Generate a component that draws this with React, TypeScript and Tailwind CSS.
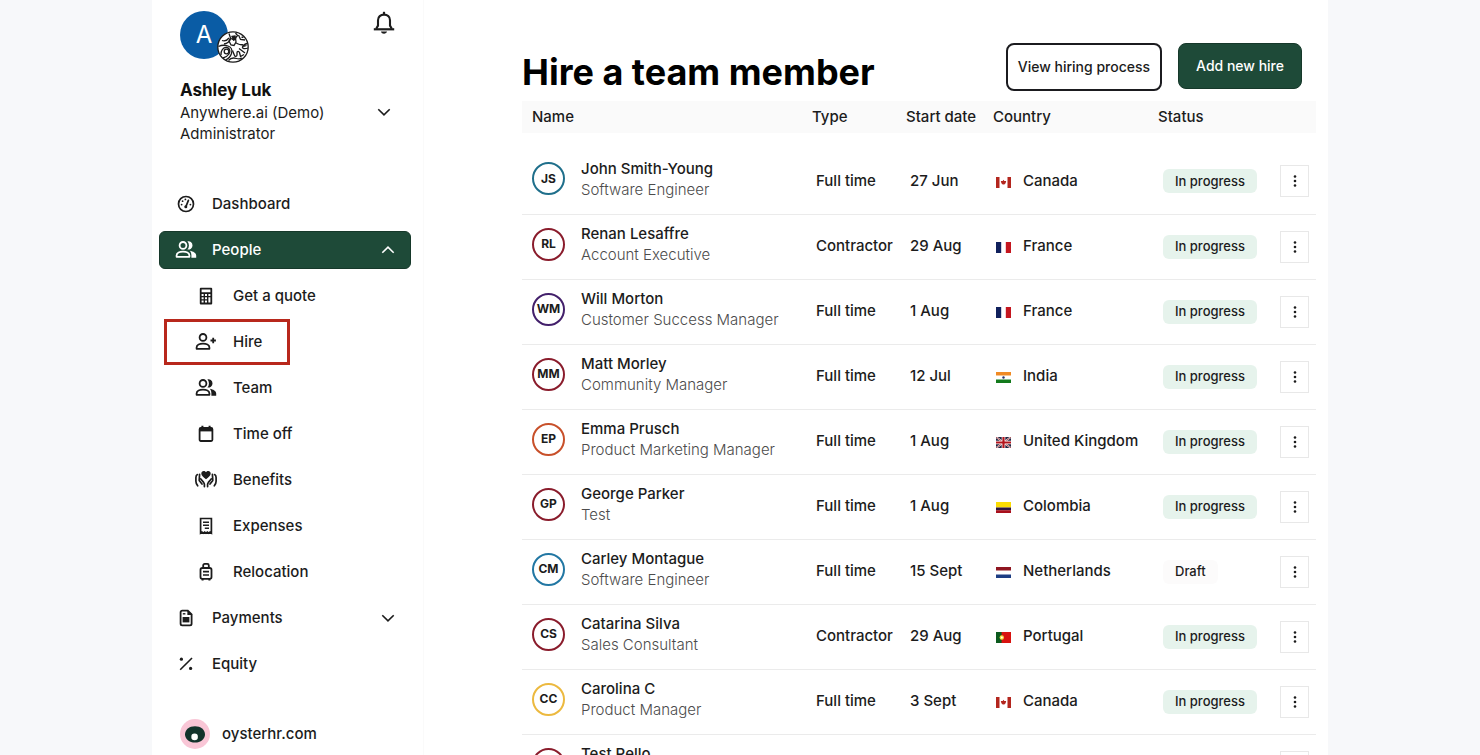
import React from "react";

type IconProps = { className?: string };

const base = {
  width: 20,
  height: 20,
  viewBox: "0 0 20 20",
  fill: "none",
  stroke: "currentColor",
  strokeWidth: 1.8,
  "aria-hidden": true,
} as const;

const GaugeIcon = () => (
  <svg {...base}>
    <circle cx="10" cy="10" r="7.5" strokeWidth="1.7" />
    <path d="M10 12.4L12.4 6.4" strokeWidth="1.7" strokeLinecap="round" />
    <circle cx="9.8" cy="12.8" r="1.5" fill="currentColor" stroke="none" />
    <g fill="currentColor" stroke="none">
      <circle cx="5.6" cy="10.6" r="0.9" />
      <circle cx="6.6" cy="7.2" r="0.9" />
      <circle cx="9.4" cy="5.4" r="0.9" />
      <circle cx="14.4" cy="10.6" r="0.9" />
    </g>
  </svg>
);

const PeopleIcon = () => (
  <svg {...base} width={22} height={20} viewBox="0 0 22 20" className="shrink-0">
    <circle cx="8" cy="5.4" r="3.4" />
    <path d="M1.6 16.800v-1.400c0-2.500 3.200-3.800 6.400-3.800s6.400 1.300 6.400 3.800v1.400z" strokeLinejoin="round" />
    <path d="M12.400 1.300a4.200 4.200 0 1 1 0 8.200 6.200 6.200 0 0 0 0-8.200z" fill="currentColor" stroke="none" />
    <path d="M14.800 10.700c3.400.6 6.400 2.200 6.400 4.800v2.200h-4.800v-2.200c0-2-.4-3.400-1.600-4.800z" fill="currentColor" stroke="none" />
  </svg>
);

const CalculatorIcon = () => (
  <svg {...base}>
    <path
      fillRule="evenodd"
      fill="currentColor"
      stroke="none"
      d="M3.800 2.800a1 1 0 0 1 1-1h10.400a1 1 0 0 1 1 1v14.600a1 1 0 0 1-1 1H4.800a1 1 0 0 1-1-1zM5.600 3.600v2.600h8.800V3.600zM5.600 8v1.900h2V8zM9 8v1.900h2V8zM12.400 8v1.900h2V8zM5.600 11.300v1.900h2v-1.900zM9 11.300v1.900h2v-1.900zM12.400 11.300v5.300h2v-5.300zM5.600 14.600v2h2v-2zM9 14.600v2h2v-2z"
    />
  </svg>
);

const HireIcon = () => (
  <svg {...base} width={22} height={20} viewBox="0 0 22 20">
    <circle cx="8" cy="5.400" r="3.400" />
    <path d="M1.600 16.800v-1.400c0-2.500 3.200-3.800 6.400-3.800s6.400 1.300 6.400 3.800v1.400z" strokeLinejoin="round" />
    <path d="M18.200 5.800v5.400M15.500 8.500h5.400" />
  </svg>
);

const CalendarIcon = () => (
  <svg {...base}>
    <rect x="3.600" y="4" width="12.800" height="13" rx="1.200" strokeWidth="1.800" />
    <path d="M3.600 4.400h12.800v3H3.600z" fill="currentColor" stroke="none" />
    <path d="M6.400 1.800v3M13.600 1.800v3" strokeWidth="2" />
  </svg>
);

const BenefitsIcon = () => (
  <svg {...base} width={22} height={20} viewBox="0 0 22 20">
    <path
      d="M11 9.200C8.200 7.200 6.300 5.500 6.300 3.500c0-1.400 1.100-2.400 2.400-2.400.9 0 1.800.4 2.300 1.200.5-.8 1.400-1.200 2.300-1.200 1.300 0 2.400 1 2.400 2.400 0 2-1.900 3.700-4.700 5.700z"
      fill="currentColor"
      stroke="none"
    />
    <g strokeWidth="1.700" strokeLinecap="round" strokeLinejoin="round">
      <path d="M2.400 4.600C1.300 5.200.9 6.200.9 7.400v3.800c0 1.800.7 3.200 1.800 4.600" />
      <path d="M4.600 4.400L4.200 10.400 7 14" />
      <path d="M5.600 8.800l3 3.600c.6.800.8 1.400.8 2.200v2" />
      <path d="M19.600 4.600c1.100.6 1.500 1.600 1.500 2.800v3.800c0 1.800-.7 3.200-1.800 4.600" />
      <path d="M17.400 4.400l.4 6L15 14" />
      <path d="M16.400 8.800l-3 3.600c-.6.800-.8 1.400-.8 2.200v2" />
    </g>
  </svg>
);

const ReceiptIcon = () => (
  <svg {...base}>
    <path d="M4.600 2.500h10.800v14.600l-1.350-1-1.350 1-1.350-1-1.350 1-1.350-1-1.350 1-1.350-1-1.350 1z" strokeWidth="1.700" />
    <path d="M7 6.200h6M7 9.200h6M8.800 12.200H13" strokeWidth="1.500" />
  </svg>
);

const LuggageIcon = () => (
  <svg {...base}>
    <rect x="4.500" y="6" width="11" height="10.800" rx="1.800" strokeWidth="1.800" />
    <path d="M7.200 6V3.400c0-.9.6-1.500 1.500-1.500h2.600c.9 0 1.500.6 1.500 1.500V6" />
    <path d="M7 9.600h6M7 13h6" strokeWidth="1.600" />
    <path d="M6.600 17v1.600M13.400 17v1.600" strokeWidth="2" />
  </svg>
);

const PaymentsIcon = () => (
  <svg {...base}>
    <path d="M4.600 4.200c0-1 .6-1.600 1.600-1.600h5.600l3.800 3.800v9.400c0 1-.6 1.600-1.600 1.600H6.200c-1 0-1.600-.6-1.600-1.600z" strokeWidth="1.800" />
    <path d="M11.400 2v5h5z" fill="currentColor" stroke="none" />
    <path d="M6.600 9h6.800v5.400H6.600z" fill="currentColor" stroke="none" />
    <path d="M6.800 5.800h2.600" strokeWidth="1.400" />
  </svg>
);

const EquityIcon = () => (
  <svg {...base}>
    <path d="M4.200 15.800L16 4" strokeWidth="1.600" />
    <circle cx="5.400" cy="5.200" r="1.600" fill="currentColor" stroke="none" />
    <circle cx="14.600" cy="14.400" r="1.600" fill="currentColor" stroke="none" />
  </svg>
);

const BellIcon = () => (
  <svg {...base} width={24} height={24} viewBox="0 0 24 24">
    <path d="M1.800 18.300h20.400" strokeWidth="2.200" />
    <path d="M4.200 17.800L6 14.600V9.200C6 5.800 8.600 3.600 12 3.600s6 2.200 6 5.600v5.400l1.800 3.200" strokeWidth="2.100" />
    <path d="M12 .8v2.400" strokeWidth="2.200" />
    <path d="M9 20.600h6c-.3 1.400-1.500 2.200-3 2.200s-2.700-.8-3-2.200z" fill="currentColor" stroke="none" />
  </svg>
);

const Chevron = ({ up = false }: { up?: boolean }) => (
  <svg {...base} width={14} height={14} viewBox="0 0 14 14" strokeWidth={1.600}>
    <path d={up ? "M1.300 9.800L7 4.200l5.700 5.600" : "M1.300 4.200L7 9.800l5.700-5.600"} />
  </svg>
);

const OrgLogo = ({ className }: IconProps) => (
  <svg className={className} width="32" height="32" viewBox="0 0 32 32" fill="none" stroke="#1b1b1b" strokeWidth="1.300" aria-hidden>
    <circle cx="16" cy="16" r="15.200" fill="#fff" />
    <path d="M5 9.500c2.500 1 5 0 7-2.500M7 13c3-.5 5.500-2 6.500-5" />
    <path d="M12 2.500l1.500 4.500-1.500 3 2 4 3 .5 2-3.500-.5-4 2-2.500-2-2.500M14 7.500l3 1.500 2-2" />
    <path d="M15 5.500l3-.5.500 2.500-2 1.500z" fill="#1b1b1b" />
    <path d="M21.500 4l2 4.500 4.500.5M24.500 6.500l2-.5" />
    <path d="M1.500 15.500c3-1.500 6.500-1.500 9.500-.5 3.500 1.200 4.500 4.500 3.500 7.500s-3.500 5.500-6 6.500" />
    <path d="M4 24c-.5-4 2-8 6-7.500 3 .5 3.500 4 2 6.500-1.500 2.200-4 3.500-6 4" />
    <circle cx="9.500" cy="20.500" r="2.300" />
    <path d="M19 12c2.500 1 4 2.500 7 1.500M30.500 12.500c-2.500.5-4.500 1.500-5 3.500-.3 1.800 2.500 2 5.500 1M26.500 15.500l3-1" />
    <path d="M15.500 19.500l2 5c.5 1.500 2.500 1 2.500-.5v-2.500c0-1.500 2-1.500 2.500 0l1 4 3.500-2M22 17.500l6 4.500" />
    <path d="M11.500 29.500c2-2.500 5-3 8-2s4 .5 5.500-.5" />
  </svg>
);

const OysterLogo = () => (
  <svg width="30" height="30" viewBox="0 0 30 30" aria-hidden>
    <circle cx="15" cy="15" r="15" fill="#f9c6d6" />
    <path d="M15 7.200c5.700 0 10 3.500 10 8.100 0 4.900-4.300 8.300-10 8.300S5 20.200 5 15.300c0-4.600 4.300-8.100 10-8.100z" fill="#12332b" />
    <circle cx="14.600" cy="17.900" r="3.300" fill="#fff" />
  </svg>
);

const flags: Record<string, React.ReactNode> = {
  Canada: (
    <>
      <path fill="#fff" d="M0 0h15v11H0z" />
      <path fill="#b3261e" d="M0 0h3.500v11H0zM11.500 0H15v11h-3.500zM7.500 2.800l.8 1.200 1.900-.1-.6 2.300-1.300 1.300H6.700L5.400 6.200l-.6-2.300 1.900.1z" />
    </>
  ),
  France: (
    <>
      <path fill="#fff" d="M0 0h15v11H0z" />
      <path fill="#10205c" d="M0 0h5.200v11H0z" />
      <path fill="#c4161f" d="M9.800 0H15v11H9.800z" />
    </>
  ),
  India: (
    <>
      <path fill="#fff" d="M0 0h15v11H0z" />
      <path fill="#f08a24" d="M0 0h15v3.500H0z" />
      <path fill="#137a1c" d="M0 7.500h15V11H0z" />
      <circle cx="7.500" cy="5.500" r="1.200" fill="#26346e" />
    </>
  ),
  "United Kingdom": (
    <>
      <path fill="#22233f" d="M0 0h15v11H0z" />
      <path stroke="#fff" strokeWidth="1.800" d="M0 0l15 11M15 0L0 11" />
      <path stroke="#8f1620" strokeWidth="0.800" d="M0 0l15 11M15 0L0 11" />
      <path stroke="#fff" strokeWidth="3.600" d="M7.500 0v11M0 5.500h15" />
      <path stroke="#b3141c" strokeWidth="2.200" d="M7.500 0v11M0 5.500h15" />
    </>
  ),
  Colombia: (
    <>
      <path fill="#fbdc04" d="M0 0h15v5.500H0z" />
      <path fill="#2b1440" d="M0 5.500h15v2.700H0z" />
      <path fill="#a80f1c" d="M0 8.200h15V11H0z" />
    </>
  ),
  Netherlands: (
    <>
      <path fill="#fff" d="M0 0h15v11H0z" />
      <path fill="#8f1620" d="M0 0h15v3.500H0z" />
      <path fill="#1d3d83" d="M0 7.500h15V11H0z" />
    </>
  ),
  Portugal: (
    <>
      <path fill="#d8120f" d="M0 0h15v11H0z" />
      <path fill="#0c5a1e" d="M0 0h5.600v11H0z" />
      <circle cx="5.800" cy="5.500" r="2.200" fill="#f5dc3c" />
      <circle cx="5.800" cy="5.500" r="0.900" fill="#fff" />
    </>
  ),
};

const Flag = ({ country }: { country: string }) => (
  <svg width="15" height="11" viewBox="0 0 15 11" className="mt-0.5 shrink-0" aria-hidden>
    {flags[country]}
  </svg>
);

type Hire = {
  initials: string;
  ring: string;
  name: string;
  role: string;
  type: string;
  start: string;
  country: string;
  status: string;
};

const blue = "border-[#1f6f8b]";
const red = "border-[#8a1c2c]";

const hires: Hire[] = [
  { initials: "JS", ring: blue, name: "John Smith-Young", role: "Software Engineer", type: "Full time", start: "27 Jun", country: "Canada", status: "In progress" },
  { initials: "RL", ring: red, name: "Renan Lesaffre", role: "Account Executive", type: "Contractor", start: "29 Aug", country: "France", status: "In progress" },
  { initials: "WM", ring: "border-[#43206b]", name: "Will Morton", role: "Customer Success Manager", type: "Full time", start: "1 Aug", country: "France", status: "In progress" },
  { initials: "MM", ring: red, name: "Matt Morley", role: "Community Manager", type: "Full time", start: "12 Jul", country: "India", status: "In progress" },
  { initials: "EP", ring: "border-[#c8502a]", name: "Emma Prusch", role: "Product Marketing Manager", type: "Full time", start: "1 Aug", country: "United Kingdom", status: "In progress" },
  { initials: "GP", ring: red, name: "George Parker", role: "Test", type: "Full time", start: "1 Aug", country: "Colombia", status: "In progress" },
  { initials: "CM", ring: "border-[#2277a3]", name: "Carley Montague", role: "Software Engineer", type: "Full time", start: "15 Sept", country: "Netherlands", status: "Draft" },
  { initials: "CS", ring: red, name: "Catarina Silva", role: "Sales Consultant", type: "Contractor", start: "29 Aug", country: "Portugal", status: "In progress" },
  { initials: "CC", ring: "border-[#ecb93f]", name: "Carolina C", role: "Product Manager", type: "Full time", start: "3 Sept", country: "Canada", status: "In progress" },
  { initials: "TP", ring: red, name: "Test Pello", role: "Test", type: "Full time", start: "3 Sept", country: "Canada", status: "In progress" },
];

const peopleItems = [
  { label: "Get a quote", Icon: CalculatorIcon },
  { label: "Hire", Icon: HireIcon },
  { label: "Team", Icon: PeopleIcon },
  { label: "Time off", Icon: CalendarIcon },
  { label: "Benefits", Icon: BenefitsIcon },
  { label: "Expenses", Icon: ReceiptIcon },
  { label: "Relocation", Icon: LuggageIcon },
];

function Sidebar() {
  return (
    <aside className="flex w-[272px] shrink-0 flex-col border-r border-[#fafafa]">
      <div className="flex items-start justify-between pt-[11px] pr-[27px] pl-7">
        <div className="relative">
          <div className="flex size-12 items-center justify-center rounded-full bg-[#0a5ca5] text-2xl text-white">A</div>
          <OrgLogo className="absolute top-5 left-[37px]" />
        </div>
        <button type="button" aria-label="Notifications">
          <BellIcon />
        </button>
      </div>

      <button type="button" className="mt-5 flex items-center justify-between pr-8 pl-7 text-left">
        <span className="flex flex-col">
          <span className="text-[17px] leading-[23px] font-bold text-[#111]">Ashley Luk</span>
          <span className="text-[15px] leading-[21px]">Anywhere.ai (Demo)</span>
          <span className="text-[15px] leading-[21px]">Administrator</span>
        </span>
        <Chevron />
      </button>

      <nav aria-label="Main" className="mt-[37px] text-[15px] font-medium">
        <ul>
          <li>
            <a href="#dashboard" className="flex h-[46px] items-center gap-4 pl-6">
              <span className="flex w-5 justify-center"><GaugeIcon /></span>
              Dashboard
            </a>
          </li>
          <li>
            <div className="flex h-[46px] items-center pr-3 pl-[7px]">
              <button
                type="button"
                aria-expanded="true"
                className="flex h-[38px] w-full items-center gap-4 rounded-md border border-[#16382a] bg-[#1e4a38] pr-[15px] pl-4 text-white"
              >
                <span className="flex w-5 justify-center"><PeopleIcon /></span>
                People
                <span className="ml-auto"><Chevron up /></span>
              </button>
            </div>
            <ul>
              {peopleItems.map(({ label, Icon }) => (
                <li key={label} className="pl-3">
                  <a
                    href="#people"
                    className={
                      label === "Hire"
                        ? "flex h-[46px] w-[126px] items-center gap-4 border-3 border-[#b8281c] pl-[28px]"
                        : "flex h-[46px] items-center gap-4 pl-[31px]"
                    }
                  >
                    <span className="flex w-[22px] justify-center"><Icon /></span>
                    {label}
                  </a>
                </li>
              ))}
            </ul>
          </li>
          <li>
            <button type="button" className="flex h-[46px] w-full items-center gap-4 pr-7 pl-6">
              <span className="flex w-5 justify-center"><PaymentsIcon /></span>
              Payments
              <span className="ml-auto"><Chevron /></span>
            </button>
          </li>
          <li>
            <a href="#equity" className="flex h-[46px] items-center gap-4 pl-6">
              <span className="flex w-5 justify-center"><EquityIcon /></span>
              Equity
            </a>
          </li>
        </ul>
      </nav>

      <a href="#oysterhr" className="mt-8 flex items-center gap-3 pl-7 text-[15px] font-medium">
        <OysterLogo />
        oysterhr.com
      </a>
    </aside>
  );
}

export default function App() {
  return (
    <div className="h-screen overflow-hidden bg-[#f7f8fa] font-['Inter','Liberation_Sans',sans-serif] text-[#1c1c1c]">
      <div className="mx-auto flex min-h-full max-w-[1176px] bg-white">
        <Sidebar />
        <main className="min-w-0 flex-1 pt-[43px] pr-3 pl-[98px]">
          <header className="flex items-start justify-between pr-3.5">
            <h1 className="pt-1.5 text-4xl leading-[46px] font-bold text-black">Hire a team member</h1>
            <div className="flex gap-4">
              <button type="button" className="h-12 rounded-lg border-2 border-[#1b1b1f] px-2.5 text-sm font-medium">
                View hiring process
              </button>
              <button
                type="button"
                className="h-[46px] rounded-lg border border-[#16382a] bg-[#1e4a38] px-[17px] text-sm font-medium text-white"
              >
                Add new hire
              </button>
            </div>
          </header>

          <table className="mt-1.5 w-full table-fixed border-collapse text-left text-[15px] font-medium">
            <colgroup>
              <col />
              <col className="w-[94px]" />
              <col className="w-[87px]" />
              <col className="w-[165px]" />
              <col className="w-[122px]" />
              <col className="w-9" />
            </colgroup>
            <thead className="bg-[#fafafa] whitespace-nowrap">
              <tr className="h-8">
                <th scope="col" className="pl-2.5 font-medium">Name</th>
                <th scope="col" className="font-medium">Type</th>
                <th scope="col" className="font-medium">Start date</th>
                <th scope="col" className="font-medium">Country</th>
                <th scope="col" className="font-medium">Status</th>
                <th scope="col" aria-label="Actions" />
              </tr>
            </thead>
            <tbody className="whitespace-nowrap before:block before:h-4 before:content-['']">
              {hires.map((h) => (
                <tr key={h.name} className="h-[65px] border-b border-[#ebebeb]">
                  <td className="pb-[5px] pl-2.5">
                    <div className="flex items-center gap-4">
                      <span
                        className={`flex size-[33px] shrink-0 items-center justify-center rounded-full border-2 text-xs font-bold ${h.ring}`}
                      >
                        {h.initials}
                      </span>
                      <span className="flex flex-col leading-[21px]">
                        <span>{h.name}</span>
                        <span className="font-light text-[#4c4c4c]">{h.role}</span>
                      </span>
                    </div>
                  </td>
                  <td className="pl-1">{h.type}</td>
                  <td className="pl-1">{h.start}</td>
                  <td className="pl-[3px]">
                    <span className="flex items-center gap-3">
                      <Flag country={h.country} />
                      {h.country}
                    </span>
                  </td>
                  <td className="pl-[5px]">
                    <span
                      className={
                        h.status === "Draft"
                          ? "inline-flex h-6 items-center rounded-md bg-[#fcfbfb] px-3 text-[13px]"
                          : "inline-flex h-6 items-center rounded-md bg-[#e6f3ec] px-3 text-[13px]"
                      }
                    >
                      {h.status}
                    </span>
                  </td>
                  <td>
                    <button
                      type="button"
                      aria-label={`Actions for ${h.name}`}
                      className="flex h-8 w-[29px] items-center justify-center border border-[#e8e8e8]"
                    >
                      <svg width="4" height="14" viewBox="0 0 4 14" fill="#1c1c1c" aria-hidden>
                        <circle cx="2" cy="2.500" r="1.300" />
                        <circle cx="2" cy="7" r="1.300" />
                        <circle cx="2" cy="11.500" r="1.300" />
                      </svg>
                    </button>
                  </td>
                </tr>
              ))}
            </tbody>
          </table>
        </main>
      </div>
    </div>
  );
}
